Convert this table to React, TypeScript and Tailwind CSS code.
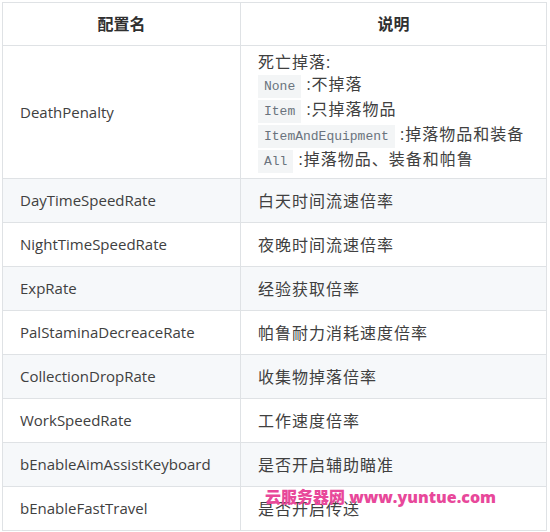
const rows: { name: string; desc: string }[] = [
  { name: "DayTimeSpeedRate", desc: "白天时间流速倍率" },
  { name: "NightTimeSpeedRate", desc: "夜晚时间流速倍率" },
  { name: "ExpRate", desc: "经验获取倍率" },
  { name: "PalStaminaDecreaceRate", desc: "帕鲁耐力消耗速度倍率" },
  { name: "CollectionDropRate", desc: "收集物掉落倍率" },
  { name: "WorkSpeedRate", desc: "工作速度倍率" },
  { name: "bEnableAimAssistKeyboard", desc: "是否开启辅助瞄准" },
  { name: "bEnableFastTravel", desc: "是否开启传送" },
];

const drops: { code: string; text: string }[] = [
  { code: "None", text: "不掉落" },
  { code: "Item", text: "只掉落物品" },
  { code: "ItemAndEquipment", text: "掉落物品和装备" },
  { code: "All", text: "掉落物品、装备和帕鲁" },
];

function Code({ children }: { children: string }) {
  return (
    <code className="bg-[#f3f5f6] px-[6px] py-[4px] text-[13px] tracking-normal text-[#6a737d] font-['Liberation_Mono',monospace]">
      {children}
    </code>
  );
}

export default function App() {
  return (
    <div className="relative bg-white w-[550px] h-[532px] p-[2px] font-['Open_Sans','Noto_Sans_CJK_SC',sans-serif] text-[15px] text-[#404040]">
      <table className="w-[545px] border-collapse table-fixed">
        <thead>
          <tr className="h-[43px]">
            <th className="w-[238px] border border-[#dfe2e5] text-[16px] font-bold text-[#303030]">配置名</th>
            <th className="border border-[#dfe2e5] text-[16px] font-bold text-[#303030]">说明</th>
          </tr>
        </thead>
        <tbody>
          <tr className="h-[133px]">
            <td className="border border-[#dfe2e5] px-[17px]">DeathPenalty</td>
            <td className="border border-[#dfe2e5] px-[17px] text-[16px] tracking-[1px] leading-[22px]">
              <div>死亡掉落:</div>
              {drops.map((d) => (
                <div key={d.code}>
                  <Code>{d.code}</Code>
                  <span> :{d.text}</span>
                </div>
              ))}
            </td>
          </tr>
          {rows.map((r, i) => (
            <tr key={r.name} className={i % 2 === 0 ? "h-[44px] bg-[#f6f8fa]" : "h-[44px] bg-white"}>
              <td className="border border-[#dfe2e5] px-[17px]">{r.name}</td>
              <td className="border border-[#dfe2e5] px-[17px] text-[16px] tracking-[1px]">{r.desc}</td>
            </tr>
          ))}
        </tbody>
      </table>
      <div className="absolute left-[265px] top-[485px] text-[16px] font-extrabold text-[#e8489a] whitespace-nowrap">
        云服务器网 www.yuntue.com
      </div>
    </div>
  );
}
